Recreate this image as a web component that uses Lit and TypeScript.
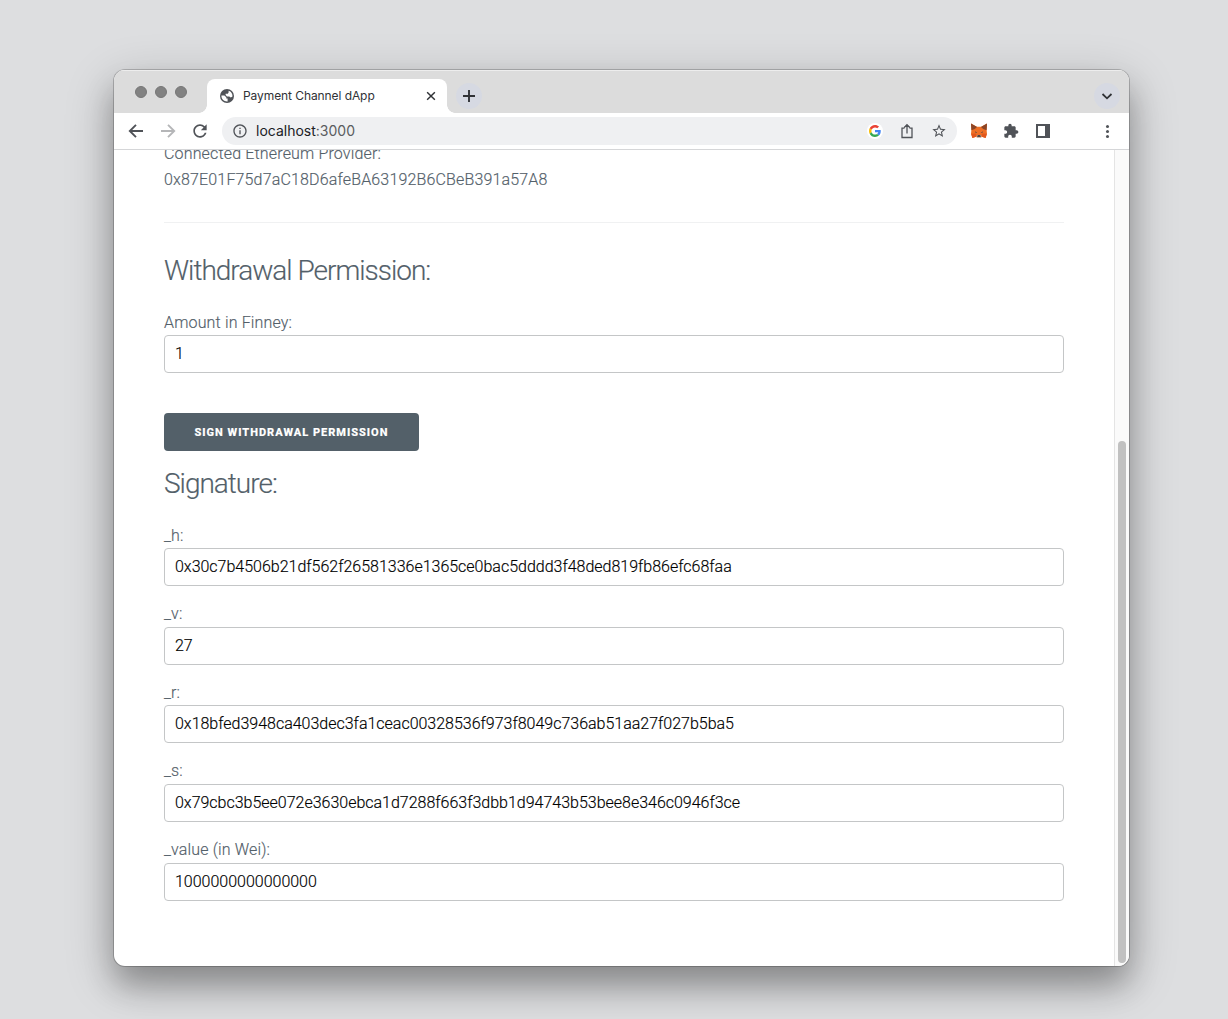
import { LitElement, html, css, svg } from "lit";
import { customElement, property } from "lit/decorators.js";

const stroke = (d: string, size = 20, width = 1.8) => html`<svg width=${size} height=${size} viewBox="0 0 20 20" fill="none" stroke="currentColor" stroke-width=${width}><path d=${d} /></svg>`;
const glyph = (d: string, size: number) => html`<svg width=${size} height=${size} viewBox="0 0 24 24" fill="currentColor"><path d=${d} /></svg>`;

const globe = html`<svg width="14" height="14" viewBox="0 0 14 14"><circle cx="7" cy="7" r="7" fill="#505358"/><path d="M1.4 6.6H4.4L6.3 8.2V9.6H7.6V12.5C4.2 12.8 1.3 10.3 1.4 6.6ZM8.6 1.7C11.2 2.4 12.8 4.8 12.5 7.6L10.8 8.4 9.2 7.4H7L5.6 6V4.8H7.8L8.6 3.6Z" fill="#fff"/></svg>`;

const google = html`<svg width="12" height="12" viewBox="0 0 48 48"><path fill="#EA4335" d="M24 9.5c3.54 0 6.71 1.22 9.21 3.6l6.85-6.85C35.9 2.38 30.47 0 24 0 14.62 0 6.51 5.38 2.56 13.22l7.98 6.19C12.43 13.72 17.74 9.5 24 9.5z"/><path fill="#4285F4" d="M46.98 24.55c0-1.57-.15-3.09-.38-4.55H24v9.02h12.94c-.58 2.96-2.26 5.48-4.78 7.18l7.73 6c4.51-4.18 7.09-10.36 7.09-17.65z"/><path fill="#FBBC05" d="M10.53 28.59c-.48-1.45-.76-2.99-.76-4.59s.27-3.14.76-4.59l-7.98-6.19C.92 16.46 0 20.12 0 24c0 3.88.92 7.54 2.56 10.78l7.97-6.19z"/><path fill="#34A853" d="M24 48c6.48 0 11.93-2.13 15.89-5.81l-7.73-6c-2.15 1.45-4.92 2.3-8.16 2.3-6.26 0-11.57-4.22-13.47-9.91l-7.98 6.19C6.51 42.62 14.62 48 24 48z"/></svg>`;

const fox = html`<svg width="18" height="16" viewBox="0 0 18 16">
${svg`<path d="M1 .6 7 3.8H11L17 .6 16.6 7 17 11 15.6 15 11.5 13.8 10.6 15H7.4L6.5 13.8 2.4 15 1 11 1.4 7Z" fill="#ee6f25"/>
<path d="M1 .6 7 4 4.8 6 1.4 7.2ZM17 .6 11 4 13.2 6 16.6 7.2Z" fill="#8a4527"/>
<path d="M1.2 10.8 6 10.6 6.6 13.6 2.4 15ZM16.8 10.8 12 10.6 11.4 13.6 15.6 15Z" fill="#e2571c"/>
<path d="M4.8 8.3 7.3 9.4 5.8 9.9ZM13.2 8.3 10.7 9.4 12.2 9.9Z" fill="#5e4a45"/>
<path d="M7 12.1H11L11.6 14.2 10.6 15H7.4L6.4 14.2Z" fill="#d8b8a2"/><path d="M7.6 12.2H10.4L10.9 13.8H7.1Z" fill="#241f24"/>`}</svg>`;

@customElement("labelled-field")
class LabelledField extends LitElement {
  @property() label = "";
  @property() value = "";
  static styles = css`
    :host { display: flex; flex-direction: column; }
    .label { line-height: 25.6px; }
    .box { box-sizing: border-box; height: 38px; border: 1px solid #c4c6c7; border-radius: 4px; padding: 0 10px; line-height: 36px; color: #000; letter-spacing: -0.01px; }
  `;
  render() {
    return html`<div class="label">${this.label}</div><div class="box">${this.value}</div>`;
  }
}

@customElement("browser-tabs")
class BrowserTabs extends LitElement {
  static styles = css`
    :host { display: flex; height: 43px; box-sizing: border-box; background: #dcdcdc; padding-left: 21px; padding-right: 9px; color: #303236; box-shadow: inset 0 1px #ededed; }
    .lights { display: flex; gap: 8px; padding-top: 16px; width: 72px; }
    .light { width: 10px; height: 10px; border: 1px solid #777; border-radius: 50%; background: #828282; }
    .tab { margin-top: 9px; width: 240px; box-sizing: border-box; height: 34px; border-radius: 8px 8px 0 0; background: #fff; display: flex; align-items: center; padding: 0 9px 0 13px; position: relative; }
    .tab::before, .tab::after { content: ""; position: absolute; bottom: 0; width: 8px; height: 8px; }
    .tab::before { left: -8px; background: radial-gradient(circle at 0 0, transparent 7.5px, #fff 8px); }
    .tab::after { right: -8px; background: radial-gradient(circle at 100% 0, transparent 7.5px, #fff 8px); }
    .title { font: 400 12px/16px Inter, sans-serif; letter-spacing: -0.08px; margin-left: 9px; flex: 1; white-space: nowrap; }
    .round { width: 26px; height: 26px; border-radius: 50%; background: #d6d9e2; display: flex; align-items: center; justify-content: center; margin-top: 13px; }
    .add { margin-left: 9px; margin-right: auto; }
    svg { display: block; }
  `;
  render() {
    return html`
      <div class="lights"><div class="light"></div><div class="light"></div><div class="light"></div></div>
      <div class="tab">${globe}<div class="title">Payment Channel dApp</div>${stroke("M4.5 4.5 15.5 15.5M15.5 4.5 4.5 15.5", 14, 2.1)}</div>
      <div class="round add">${stroke("M10 4V16M4 10H16", 20, 1.9)}</div>
      <div class="round">${stroke("M5.5 8 10 12.3 14.5 8", 20, 1.8)}</div>`;
  }
}

@customElement("browser-toolbar")
class BrowserToolbar extends LitElement {
  static styles = css`
    :host { display: flex; align-items: center; height: 37px; box-sizing: border-box; border-bottom: 1px solid #d5d6d8; background: #fff; padding-left: 12px; padding-right: 12px; color: #505358; }
    svg { display: block; }
    .nav { display: flex; gap: 12px; width: 96px; }
    .off { color: #b5b6b8; }
    .bar { width: 735px; height: 28px; box-sizing: border-box; border-radius: 14px; background: #eff0f2; display: flex; align-items: center; padding: 0 8px 0 8px; }
    .url { flex: 1; font: 400 14px/20px Inter, sans-serif; color: #5a5c60; margin-left: 6px; }
    .host { color: #202124; }
    .actions { display: flex; align-items: center; gap: 12px; }
    .cell { width: 20px; height: 20px; display: flex; align-items: center; justify-content: center; }
    .g { border-radius: 50%; background: #fff; width: 16px; height: 16px; margin: 0 2px; }
    .ext { display: flex; gap: 12px; margin-left: 12px; margin-right: auto; }
    .menu { width: 3px; display: flex; flex-direction: column; gap: 2px; margin-right: 8px; }
    .dot { width: 3px; height: 3px; border-radius: 50%; background: #505358; }
  `;
  render() {
    return html`
      <div class="nav">
        <div>${stroke("M17 10H4M10 3.8 3.8 10 10 16.2", 20, 1.9)}</div>
        <div class="off">${stroke("M3 10H16M10 3.8 16.2 10 10 16.2", 20, 1.9)}</div>
        <div>${glyph("M17.65 6.35C16.2 4.9 14.21 4 12 4c-4.42 0-7.99 3.58-7.99 8s3.57 8 7.99 8c3.73 0 6.84-2.55 7.73-6h-2.08c-.82 2.33-3.04 4-5.65 4-3.31 0-6-2.69-6-6s2.69-6 6-6c1.66 0 3.14.69 4.22 1.78L13 11h7V4l-2.35 2.35z", 20)}</div>
      </div>
      <div class="bar">
        <div class="cell">${glyph("M11 7h2v2h-2zm0 4h2v6h-2zm1-9C6.48 2 2 6.48 2 12s4.48 10 10 10 10-4.48 10-10S17.52 2 12 2zm0 18c-4.41 0-8-3.59-8-8s3.59-8 8-8 8 3.59 8 8-3.59 8-8 8z", 16)}</div>
        <div class="url"><span class="host">localhost</span>:3000</div>
        <div class="actions">
          <div class="cell g">${google}</div>
          <div class="cell">${stroke("M7.5 7.2H5V16.5H15V7.2H12.5M10 12.5V4M7.2 6.5 10 3.7 12.8 6.5", 20, 1.3)}</div>
          <div class="cell">${glyph("M22 9.24l-7.19-.62L12 2 9.19 8.63 2 9.24l5.46 4.73L5.82 21 12 17.27 18.18 21l-1.63-7.03L22 9.24zM12 15.4l-3.76 2.27 1-4.28-3.32-2.88 4.38-.38L12 6.1l1.71 4.04 4.38.38-3.32 2.88 1 4.28L12 15.4z", 16)}</div>
        </div>
      </div>
      <div class="ext">
        <div class="cell">${fox}</div>
        <div class="cell">${glyph("M20.5 11H19V7c0-1.1-.9-2-2-2h-4V3.5C13 2.12 11.88 1 10.5 1S8 2.12 8 3.5V5H4c-1.1 0-1.99.9-1.99 2v3.8H3.5c1.49 0 2.7 1.21 2.7 2.7s-1.21 2.7-2.7 2.7H2V20c0 1.1.9 2 2 2h3.8v-1.5c0-1.49 1.21-2.7 2.7-2.7 1.49 0 2.7 1.21 2.7 2.7V22H17c1.1 0 2-.9 2-2v-4h1.5c1.38 0 2.5-1.12 2.5-2.5S21.88 11 20.5 11z", 16)}</div>
        <div class="cell"><svg width="14" height="14" viewBox="0 0 14 14"><path fill-rule="evenodd" d="M0 0H14V14H0ZM2 2V12H9V2Z" fill="#505358"/></svg></div>
      </div>
      <div class="menu"><div class="dot"></div><div class="dot"></div><div class="dot"></div></div>`;
  }
}

@customElement("app-root")
class AppRoot extends LitElement {
  private signature = [
    ["_h:", "0x30c7b4506b21df562f26581336e1365ce0bac5dddd3f48ded819fb86efc68faa"],
    ["_v:", "27"],
    ["_r:", "0x18bfed3948ca403dec3fa1ceac00328536f973f8049c736ab51aa27f027b5ba5"],
    ["_s:", "0x79cbc3b5ee072e3630ebca1d7288f663f3dbb1d94743b53bee8e346c0946f3ce"],
    ["_value (in Wei):", "1000000000000000"],
  ];
  static styles = css`
    :host { display: block; box-sizing: border-box; width: 1228px; height: 1019px; overflow: hidden; background: #dddee0; padding: 70px 99px 53px 114px; }
    .window { width: 1015px; height: 896px; border-radius: 11px; overflow: hidden; background: #fff; display: flex; flex-direction: column; box-shadow: 0 0 0 1px rgba(0, 0, 0, 0.2), 0 20px 30px rgba(0, 0, 0, 0.24), 0 14px 50px rgba(0, 0, 0, 0.24); }
    .view { flex: 1; min-height: 0; display: flex; }
    .page { flex: 1; overflow: hidden; padding: 0 50px; font: 300 16px/25.6px Roboto, sans-serif; letter-spacing: 0.16px; color: #536069; -webkit-text-stroke: 0.15px currentColor; }
    .provider { margin-top: -9px; }
    .rule { height: 1px; background: #f0f1f2; margin: 30px 0; }
    .heading { font-size: 28px; line-height: 36.4px; letter-spacing: -1px; margin-bottom: 20px; }
    .button { box-sizing: border-box; width: 255px; height: 38px; margin: 40px 0 15px; padding-top: 1px; border-radius: 4px; background: #536069; color: #fff; font-weight: 800; font-size: 11px; line-height: 37px; letter-spacing: 1px; text-align: center; }
    .fields { display: flex; flex-direction: column; gap: 15px; }
    .scroll { width: 15px; box-sizing: border-box; border-left: 1px solid #e4e4e4; background: #fafafa; padding: 291px 3px 3px; display: flex; }
    .thumb { flex: 1; border-radius: 4px; background: #c1c1c1; }
  `;
  render() {
    return html`<div class="window">
      <browser-tabs></browser-tabs>
      <browser-toolbar></browser-toolbar>
      <div class="view">
        <div class="page">
          <div class="provider">Connected Ethereum Provider:<br />0x87E01F75d7aC18D6afeBA63192B6CBeB391a57A8</div>
          <div class="rule"></div>
          <div class="heading">Withdrawal Permission:</div>
          <labelled-field label="Amount in Finney:" value="1"></labelled-field>
          <div class="button">SIGN WITHDRAWAL PERMISSION</div>
          <div class="heading">Signature:</div>
          <div class="fields">${this.signature.map(([l, v]) => html`<labelled-field label=${l} value=${v}></labelled-field>`)}</div>
        </div>
        <div class="scroll"><div class="thumb"></div></div>
      </div>
    </div>`;
  }
}
